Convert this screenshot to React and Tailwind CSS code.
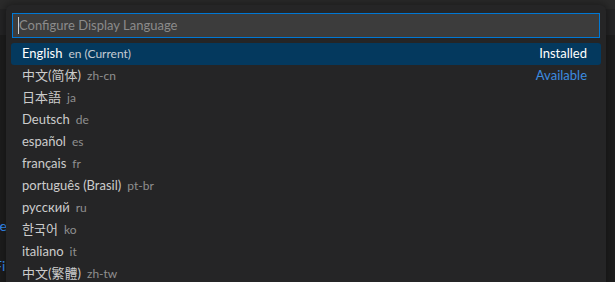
const languages = [
  { name: 'English', code: 'en (Current)', status: 'Installed', selected: true },
  { name: '中文(简体)', code: 'zh-cn', status: 'Available' },
  { name: '日本語', code: 'ja' },
  { name: 'Deutsch', code: 'de' },
  { name: 'español', code: 'es' },
  { name: 'français', code: 'fr' },
  { name: 'português (Brasil)', code: 'pt-br' },
  { name: 'русский', code: 'ru' },
  { name: '한국어', code: 'ko' },
  { name: 'italiano', code: 'it' },
  { name: '中文(繁體)', code: 'zh-tw' },
];

const font = { fontFamily: 'Lato, "Noto Sans CJK SC", "Noto Sans CJK KR", sans-serif' };

const App = () => {
  return (
    <div className="relative w-[615px] h-[282px] overflow-hidden bg-[#1e1e1e]" style={font}>
      {/* editor behind */}
      <div className="h-[9px] bg-[#2b2b2b]" />
      <div className="h-[26px] bg-[#252526]" />
      <div className="relative h-[247px]">
        <div className="absolute left-[-14px] top-[122px] text-[22px] leading-none text-[#d7d7d7]">c</div>
        <div className="absolute left-[-8px] top-[184px] text-[14px] leading-none text-[#3794ff]">Se</div>
        <div className="absolute left-[-6px] top-[224px] text-[14px] leading-none text-[#3794ff]">Fi</div>
      </div>

      {/* quick pick */}
      <div className="absolute left-[6px] top-[5px] w-[600px] h-[290px] rounded-[6px] bg-[#252526] shadow-[0_0_8px_2px_rgba(0,0,0,0.36)] px-[5px] pt-[8px]">
        <div className="mx-px h-[25px] border border-[#0078d4] bg-[#3c3c3c] flex items-center pl-[5px]">
          <div className="w-px h-[17px] bg-[#cccccc]" />
          <span className="text-[13px] text-[#8b8b8b] leading-none">Configure Display Language</span>
        </div>
        <div className="mt-[5px] flex flex-col">
          {languages.map((l) => (
            <div
              key={l.name}
              className={`h-[22px] flex items-center pl-[11px] pr-[14px] rounded-[3px] text-[13px] ${l.selected ? 'bg-[#04395e] text-white' : 'text-[#cccccc]'}`}
            >
              <span>{l.name}</span>
              <span className={`ml-[6px] text-[12px] ${l.selected ? 'text-[#c4ccd3]' : 'text-[#8f8f8f]'}`}>{l.code}</span>
              {l.status && (
                <span className={`ml-auto ${l.selected ? 'text-white' : 'text-[#3c8ce0]'}`}>{l.status}</span>
              )}
            </div>
          ))}
        </div>
      </div>
    </div>
  );
};

export default App;
